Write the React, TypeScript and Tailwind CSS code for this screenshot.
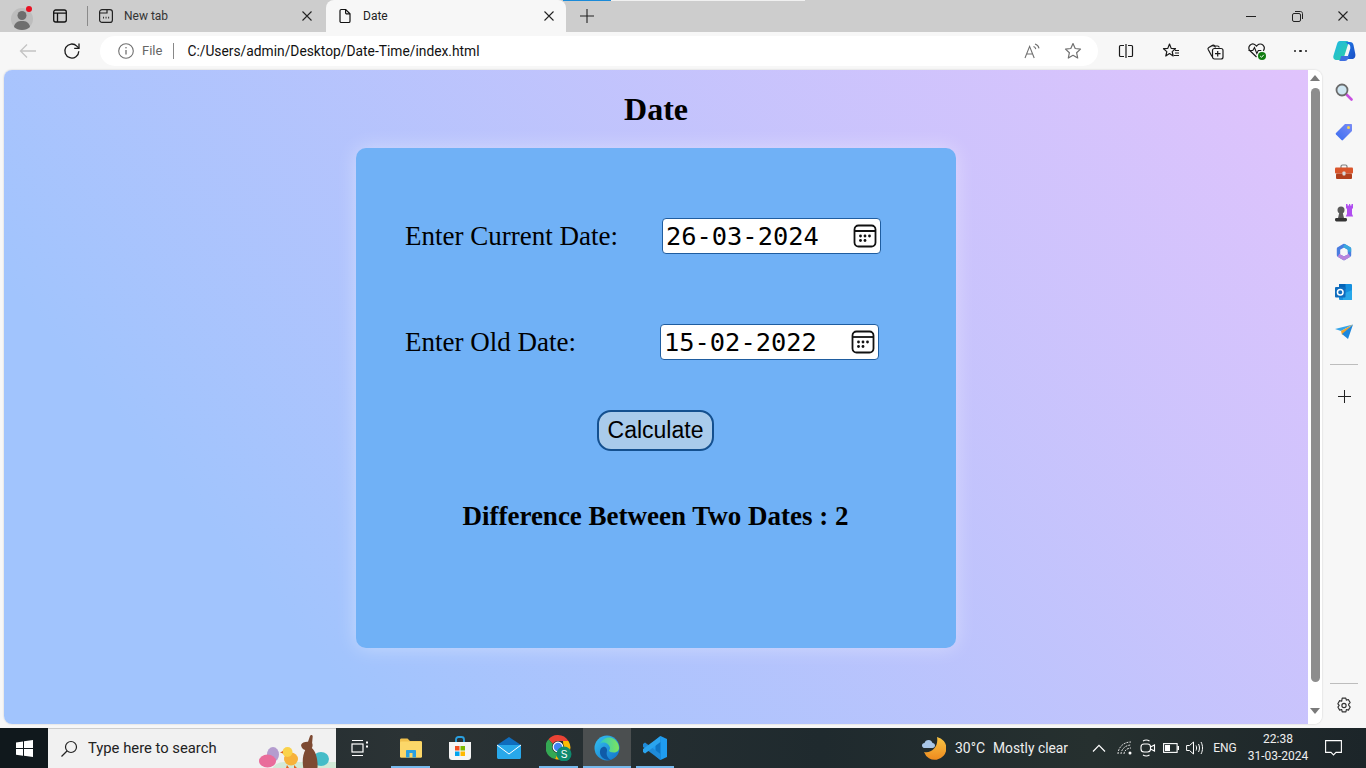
import { ReactNode } from 'react';

const Slot = ({ w, children }: { w: string; children: ReactNode }) => (
  <div className={`flex shrink-0 items-center justify-center ${w}`}>{children}</div>
);

const ProfileIcon = () => (
  <svg width="26" height="26" viewBox="0 0 26 26">
    <circle cx="12" cy="15" r="11" fill="#bdbdbd" />
    <circle cx="12" cy="11.5" r="4.5" fill="#6e6e6e" />
    <path d="M4 23c1-5 4-6 8-6s7 1 8 6c-2 2-5 3-8 3s-6-1-8-3z" fill="#6e6e6e" />
    <circle cx="19" cy="5" r="3" fill="#e81123" />
  </svg>
);

const TabsIcon = () => (
  <svg width="16" height="16" viewBox="0 0 16 16" fill="none" stroke="#111" strokeWidth="1.3">
    <rect x="1.7" y="2" width="12.6" height="12" rx="2" />
    <path d="M1.7 5.2h12.6M5.5 5.2V14" />
  </svg>
);

const NewTabIcon = () => (
  <svg width="16" height="16" viewBox="0 0 16 16" fill="none" stroke="#222" strokeWidth="1.2">
    <rect x="1.6" y="1.6" width="12.8" height="12.8" rx="2.5" />
    <path d="M1.6 5h7.4V1.6" />
    <path d="M5 9.6h.9M7.6 9.6h.9M10.2 9.6h.9" strokeWidth="1.6" />
  </svg>
);

const PageIcon = () => (
  <svg width="16" height="16" viewBox="0 0 16 16" fill="none" stroke="#111" strokeWidth="1.2">
    <path d="M3 2.8c0-.8.6-1.3 1.3-1.3h4.4L13 5.8v7.4c0 .7-.6 1.3-1.3 1.3H4.3c-.7 0-1.3-.6-1.3-1.3z" />
    <path d="M8.6 1.5v3.2c0 .7.5 1.2 1.2 1.2H13" />
  </svg>
);

const CloseIcon = ({ size = 10, color = '#222' }: { size?: number; color?: string }) => (
  <svg width={size} height={size} viewBox="0 0 10 10" stroke={color} strokeWidth="1.1">
    <path d="M.5.5l9 9M9.5.5l-9 9" />
  </svg>
);

const PlusIcon = ({ size = 14, color = '#222' }: { size?: number; color?: string }) => (
  <svg width={size} height={size} viewBox="0 0 14 14" stroke={color} strokeWidth="1.1">
    <path d="M7 0v14M0 7h14" />
  </svg>
);

const BackIcon = () => (
  <svg width="18" height="16" viewBox="0 0 18 16" fill="none" stroke="#c4c4c4" strokeWidth="1.3">
    <path d="M17 8H1.5M8 1.5L1.5 8 8 14.5" />
  </svg>
);

const RefreshIcon = () => (
  <svg width="18" height="18" viewBox="0 0 18 18" fill="none" stroke="#1a1a1a" strokeWidth="1.3">
    <path d="M15.8 9.2a7 7 0 1 1-2-5.1l2 2" />
    <path d="M16 1.6v4.8h-4.8" />
  </svg>
);

const InfoIcon = () => (
  <svg width="16" height="16" viewBox="0 0 16 16" fill="none" stroke="#707070" strokeWidth="1.1">
    <circle cx="8" cy="8" r="7.3" />
    <path d="M8 7v4.6" strokeWidth="1.3" />
    <circle cx="8" cy="4.8" r=".8" fill="#707070" stroke="none" />
  </svg>
);

const ReadAloudIcon = () => (
  <svg width="18" height="16" viewBox="0 0 18 16" fill="none" stroke="#707070" strokeWidth="1.1">
    <path d="M1 15L5.6 3.4 10.2 15M2.6 11h6" />
    <path d="M9.5 3.5c1.2.4 2 1.3 2.3 2.6M11 1c2 .6 3.6 2.2 4 4.3" />
  </svg>
);

const StarIcon = () => (
  <svg width="18" height="18" viewBox="0 0 18 18" fill="none" stroke="#707070" strokeWidth="1.2">
    <path d="M9 1.6l2.2 4.9 5.3.6-3.9 3.6 1.1 5.3L9 13.3 4.3 16l1.1-5.3L1.5 7.1l5.3-.6z" strokeLinejoin="round" />
  </svg>
);

const SplitIcon = () => (
  <svg width="16" height="16" viewBox="0 0 16 16" fill="none" stroke="#1a1a1a" strokeWidth="1.2">
    <path d="M6 2.5H2.5c-.6 0-1 .4-1 1v9c0 .6.4 1 1 1H6M10 2.5h3.500c.6 0 1 .4 1 1v9c0 .6-.4 1-1 1H10M8 1v14" />
  </svg>
);

const FavoritesIcon = () => (
  <svg width="18" height="18" viewBox="0 0 18 18" fill="none" stroke="#1a1a1a" strokeWidth="1.2">
    <path d="M7.5 2l1.700 4.400 4.300.3-3.300 2.900 1 4.400-3.700-2.500L3.800 14l1-4.400L1.500 6.700l4.300-.3z" strokeLinejoin="round" />
    <path d="M13 8.500h4M13 11h4M12 13.500h5" />
  </svg>
);

const CollectionsIcon = () => (
  <svg width="18" height="18" viewBox="0 0 18 18" fill="none" stroke="#1a1a1a" strokeWidth="1.2">
    <path d="M6 14.500L2.200 7.500c-.4-.8-.1-1.700.6-2.100l3.700-2c.8-.4 1.700-.1 2.100.6L9.500 5.500" />
    <path d="M6.500 4h5c1 0 1.600.6 1.700 1.500" />
    <rect x="6.5" y="6.5" width="10.5" height="10.5" rx="2" />
    <path d="M11.700 9v5.500M9 11.700h5.500" />
  </svg>
);

const HealthIcon = () => (
  <svg width="20" height="20" viewBox="0 0 20 20" fill="none">
    <path d="M9.500 16L3 9.800C1.400 8.200 1.400 5.700 3 4.200c1.600-1.500 4-1.500 5.500 0l1 1 1-1c1.500-1.500 4-1.500 5.500 0 1.500 1.500 1.500 4 .3 5.600" stroke="#1a1a1a" strokeWidth="1.2" />
    <path d="M1.500 9.500h4.300l1.700-3 2.300 6 1.500-3h3" stroke="#1a1a1a" strokeWidth="1.1" />
    <circle cx="15" cy="15" r="4" fill="#107c10" />
    <path d="M13.200 15l1.300 1.300 2.300-2.500" stroke="#fff" strokeWidth="1" />
  </svg>
);

const CopilotIcon = () => (
  <svg width="24" height="24" viewBox="0 0 24 24">
    <defs>
      <linearGradient id="cpA" x1="0" y1="0" x2="1" y2="1">
        <stop offset="0" stopColor="#1fb7e8" />
        <stop offset="1" stopColor="#2fd0a0" />
      </linearGradient>
      <linearGradient id="cpB" x1="0" y1="0" x2="1" y2="1">
        <stop offset="0" stopColor="#1e78e8" />
        <stop offset="1" stopColor="#1b4fc4" />
      </linearGradient>
    </defs>
    <path d="M8 2h7c1.500 0 1.800 1 1.300 2.500L12 18c-.6 2-1.600 3-3.500 3H5c-3 0-4.300-2-3.500-4.500L5 5c.5-2 1.500-3 3-3z" fill="url(#cpA)" />
    <path d="M13 3h5c2 0 3 1 3.500 3l1.800 9c.5 3-1 5-3.500 5h-7c1.500 0 2.500-1 3-2.500l2.500-8C18.500 7 18 5 15.500 5 15 4 14 3.300 13 3z" fill="url(#cpB)" />
    <path d="M9 17h8c-.5 3-2 5-4.500 5H7c1.200-.8 1.700-3 2-5z" fill="#3f6fe0" />
  </svg>
);

const CalendarIcon = () => (
  <svg width="24" height="24" viewBox="0 0 24 24" fill="none" stroke="#111" strokeWidth="1.8">
    <rect x="1.5" y="1.5" width="21" height="21" rx="4" />
    <path d="M1.5 7h21" />
    <g fill="#111" stroke="none">
      <circle cx="7.5" cy="12" r="1.4" />
      <circle cx="12" cy="12" r="1.4" />
      <circle cx="16.5" cy="12" r="1.4" />
      <circle cx="7.5" cy="16.5" r="1.4" />
      <circle cx="12" cy="16.5" r="1.4" />
    </g>
  </svg>
);

const SearchSideIcon = () => (
  <svg width="18" height="18" viewBox="0 0 18 18" fill="none">
    <path d="M10.500 10.500l6 6" stroke="#c850e0" strokeWidth="2.6" strokeLinecap="round" />
    <circle cx="7" cy="7" r="5.5" fill="#cfe6f2" stroke="#6b6b6b" strokeWidth="1.8" />
  </svg>
);

const TagIcon = () => (
  <svg width="18" height="18" viewBox="0 0 18 18">
    <defs>
      <linearGradient id="tagG" x1="0" y1="1" x2="1" y2="0">
        <stop offset="0" stopColor="#3a6cf0" />
        <stop offset="1" stopColor="#7a8cf5" />
      </linearGradient>
    </defs>
    <path d="M10 1h6c.6 0 1 .4 1 1v6L8 17c-.5.5-1 .5-1.500 0L1 11.500c-.5-.5-.5-1 0-1.500z" fill="url(#tagG)" />
    <circle cx="13.5" cy="4.5" r="1.5" fill="#f6d04d" />
  </svg>
);

const ToolboxIcon = () => (
  <svg width="18" height="16" viewBox="0 0 18 16">
    <path d="M6 4V2.500C6 1.700 6.600 1 7.500 1h3c.9 0 1.500.7 1.500 1.500V4" fill="none" stroke="#7d7d7d" strokeWidth="1.2" />
    <rect x="0" y="3.5" width="18" height="6" rx="1" fill="#d9552b" />
    <rect x="1" y="9.5" width="16" height="5.5" rx="1" fill="#b13f1c" />
    <rect x="7.5" y="7.5" width="3" height="4" rx=".8" fill="#d9d9d9" />
  </svg>
);

const ChessIcon = () => (
  <svg width="19" height="19" viewBox="0 0 19 19">
    <path d="M11 1h1.500v1.500H14V1h1.200v1.500h1.300V1H18v4l-1 1v5l1.200 2.500h-7.500L12 11V6l-1-1z" fill="#b04df0" />
    <circle cx="6" cy="7" r="3.5" fill="#5a5a5a" />
    <path d="M4.200 10h3.600l1.200 5H3z" fill="#5a5a5a" />
    <rect x="0" y="15" width="12" height="3.5" rx="1.4" fill="#333" />
  </svg>
);

const M365Icon = () => (
  <svg width="18" height="18" viewBox="0 0 18 18" fill="none">
    <path d="M9 2.500l5.500 3.200v6.600L9 15.500l-5.500-3.200V5.700z" stroke="#4a7de0" strokeWidth="3.4" strokeLinejoin="round" />
    <path d="M3.500 12.300L9 15.500l5.500-3.200" stroke="#b884dc" strokeWidth="3.4" strokeLinejoin="round" />
    <path d="M9 2.500l5.500 3.200v3" stroke="#3aa9de" strokeWidth="3.4" strokeLinejoin="round" />
  </svg>
);

const OutlookIcon = () => (
  <svg width="18" height="18" viewBox="0 0 18 18">
    <rect x="4" y="1" width="13" height="16" rx="1" fill="#1490df" />
    <rect x="4" y="1" width="6.5" height="5" fill="#0364b8" />
    <path d="M8 11l9-4v9c0 .6-.4 1-1 1H8z" fill="#28a8ea" />
    <rect x="0" y="4" width="10.5" height="10.5" rx="1" fill="#0f6cbd" />
    <circle cx="5.25" cy="9.25" r="2.8" fill="none" stroke="#fff" strokeWidth="1.5" />
  </svg>
);

const SendIcon = () => (
  <svg width="18" height="16" viewBox="0 0 18 16">
    <path d="M0 5L18 .5 6 7z" fill="#35a4e8" />
    <path d="M6 7L18 .5 7 11z" fill="#f2a32b" />
    <path d="M18 .5L13 15 7 10z" fill="#1d87dc" />
  </svg>
);

const GearIcon = () => (
  <svg width="18" height="18" viewBox="0 0 17 17" fill="none" stroke="#333" strokeWidth="1.1">
    <path d="M6.800 1h3.400l.5 2 1.900-.6 1.700 2.900-1.400 1.500.1 1.200 1.400 1.500-1.700 2.900-1.900-.6-.5 2.200H6.800l-.5-2.200-1.900.6-1.700-2.900L4 8l-1.300-1.600 1.700-3 1.900.6z" strokeLinejoin="round" />
    <circle cx="8.5" cy="8" r="2" />
  </svg>
);

const WindowsIcon = () => (
  <svg width="17" height="17" viewBox="0 0 17 17" fill="#fff">
    <path d="M0 2.400l7-1v6.700H0zM8 1.300L17 0v8.100H8zM0 9h7v6.700l-7-1zM8 9h9v8l-9-1.300z" />
  </svg>
);

const BunnyArt = () => (
  <svg width="78" height="40" viewBox="0 0 78 40">
    <path d="M14 40c2-4 6-7 12-7h52v7z" fill="#d3ead8" />
    <ellipse cx="15" cy="25.5" rx="6" ry="7.5" fill="#b49ccf" />
    <ellipse cx="9.5" cy="32" rx="8.5" ry="6.5" fill="#e96d9b" />
    <ellipse cx="63" cy="30" rx="8" ry="7" fill="#45bcc8" />
    <ellipse cx="33" cy="30" rx="7" ry="6.5" fill="#f7b23b" />
    <circle cx="29.5" cy="23" r="5" fill="#fad24a" />
    <path d="M25 22l-3 1.500 3 1z" fill="#e0641d" />
    <path d="M29 36l-1 3h3zM36 36l0 3h3z" fill="#e0641d" />
    <path d="M43 16c1-2.500 4-3.500 7-3.300l2-5.700c.6-1.400 2.600-1.200 2.700.4l-.6 6.600c.8 1.700.6 3.600-.3 5 4 3.500 6.200 11 5.700 19.500-.1.900-.7 1.500-1.600 1.500H47c-1 0-1.600-.5-1.800-1.500-1-6.500-.4-12.500 2-17.500-2-.4-3.800-2-4.200-5z" fill="#7d4a32" />
  </svg>
);

const TaskViewIcon = () => (
  <svg width="18" height="18" viewBox="0 0 18 18" fill="none" stroke="#fff" strokeWidth="1.2">
    <path d="M1 1.500h11M1 16.500h11" />
    <rect x="1" y="5" width="11" height="8" />
    <path d="M15 3.500h2M15 7.500h2" strokeWidth="2" />
  </svg>
);

const ExplorerIcon = () => (
  <svg width="22" height="20" viewBox="0 0 22 20">
    <path d="M0 2c0-1 .6-1.500 1.500-1.500h6L10 3h10.500c.9 0 1.500.6 1.500 1.500V18c0 1-.6 1.500-1.500 1.500h-19C.6 19.500 0 19 0 18z" fill="#f0c04c" />
    <rect x="0" y="3.5" width="22" height="16" rx="1.2" fill="#fbd769" />
    <path d="M6 19.500V13c0-.6.4-1 1-1h8c.6 0 1 .4 1 1v6.500h-3.500V15h-3v4.500z" fill="#2aa0e0" />
  </svg>
);

const StoreIcon = () => (
  <svg width="22" height="24" viewBox="0 0 22 24">
    <path d="M7 6V3.500C7 2 8 1 9.500 1h3C14 1 15 2 15 3.500V6" fill="none" stroke="#2aa0e0" strokeWidth="1.8" />
    <path d="M0 6h22v15c0 1.700-1.300 3-3 3H3c-1.700 0-3-1.300-3-3z" fill="#f5f5f5" />
    <rect x="6" y="10" width="4.5" height="4.5" fill="#f25022" />
    <rect x="11.5" y="10" width="4.5" height="4.5" fill="#7fba00" />
    <rect x="6" y="15.5" width="4.5" height="4.5" fill="#00a4ef" />
    <rect x="11.5" y="15.5" width="4.5" height="4.5" fill="#ffb900" />
  </svg>
);

const MailIcon = () => (
  <svg width="24" height="22" viewBox="0 0 24 22">
    <path d="M0 8L12 0l12 8z" fill="#0f6cbd" />
    <path d="M0 8h24v12.500c0 .8-.7 1.500-1.500 1.500h-21C.7 22 0 21.300 0 20.500z" fill="#28a8ea" />
    <path d="M0 8l12 9 12-9" fill="none" stroke="#fff" strokeWidth="1" />
  </svg>
);

const ChromeIcon = () => (
  <svg width="26" height="26" viewBox="0 0 26 26">
    <path d="M12 0a12 12 0 0 1 10.400 6H12a6 6 0 0 0-5.200 3L2.500 4.200A12 12 0 0 1 12 0z" fill="#ea4335" />
    <path d="M2.500 4.200L6.800 9a6 6 0 0 0 5.200 9l-3 6A12 12 0 0 1 2.500 4.200z" fill="#34a853" />
    <path d="M22.400 6A12 12 0 0 1 9 24l3-6a6 6 0 0 0 5.200-9l-.2-3z" fill="#fbbc04" />
    <circle cx="12" cy="12" r="4.8" fill="#4285f4" stroke="#fff" strokeWidth="1.2" />
    <circle cx="18" cy="19" r="7.5" fill="#0f8a6e" />
    <text x="18" y="22.5" textAnchor="middle" fontSize="10" fill="#fff" fontFamily="'Liberation Sans', sans-serif">S</text>
  </svg>
);

const EdgeIcon = () => (
  <svg width="26" height="26" viewBox="0 0 26 26">
    <defs>
      <linearGradient id="edA" x1="0" y1="0" x2="1" y2="1">
        <stop offset="0" stopColor="#35c1f1" />
        <stop offset="1" stopColor="#1271c9" />
      </linearGradient>
      <linearGradient id="edB" x1="0" y1="0" x2="1" y2="0">
        <stop offset="0" stopColor="#2fc9c2" />
        <stop offset="1" stopColor="#7ee45c" />
      </linearGradient>
    </defs>
    <circle cx="13" cy="13" r="12.5" fill="url(#edA)" />
    <path d="M6 9c2-5 7-7.500 12-6 4 1.500 7 5.500 7 10 0 3-2.500 4.500-5 4.500-3 0-5-.8-5-2 .8-1 1.300-2 .8-3.500C14.500 8 9 6 6 9z" fill="url(#edB)" />
    <path d="M9 12c-3 1-4 5-2 9 2 3 6 4.500 10 4-4-2-5-6-4-9 .5-2-1.500-5-4-4z" fill="#0f5ba8" />
  </svg>
);

const VsCodeIcon = () => (
  <svg width="26" height="26" viewBox="0 0 26 26">
    <path d="M18.500 1L25 4v18l-6.500 3L7 14z" fill="#1f9cf0" />
    <path d="M18.500 1v24l-5-4V5z" fill="#0e75c4" />
    <path d="M1 9l2-1.500 15.500 11.500v6L1 12z" fill="#1f8ad8" />
    <path d="M1 17l2 1.500L18.500 7V1L1 14z" fill="#2aa4ee" />
  </svg>
);

const WeatherIcon = () => (
  <svg width="24" height="26" viewBox="0 0 24 26">
    <defs>
      <linearGradient id="moonG" x1="0" y1="0" x2="0" y2="1">
        <stop offset="0" stopColor="#f8c545" />
        <stop offset="1" stopColor="#ee8a1e" />
      </linearGradient>
    </defs>
    <path d="M15 2a11.500 11.500 0 1 1-13 15c7 2 15-5 13-15z" fill="url(#moonG)" />
    <path d="M3 13c-2 0-3-1.200-3-2.600C0 9 1 8 2.500 8 3 6 4.500 5 6.500 5 9 5 10 6.500 10.500 8c1.500 0 2.500 1 2.500 2.500S12 13 10.500 13z" fill="#a9c7e8" />
  </svg>
);

const TrayChevron = () => (
  <svg width="14" height="8" viewBox="0 0 14 8" fill="none" stroke="#fff" strokeWidth="1.2">
    <path d="M1 7.500L7 1.300l6 6.200" />
  </svg>
);

const WifiIcon = () => (
  <svg width="16" height="14" viewBox="0 0 16 14" fill="none" stroke="#ddd" strokeWidth="1">
    <path d="M1 13c0-6 5-12 13-12M4 13c0-4 4-9 10-9M7 13c0-2.500 2.500-6 7-6" strokeDasharray="2 1" />
    <circle cx="13" cy="12" r="1.5" fill="#fff" stroke="none" />
  </svg>
);

const MeetIcon = () => (
  <svg width="16" height="18" viewBox="0 0 16 18" fill="none" stroke="#fff" strokeWidth="1.1">
    <rect x="1" y="5" width="9.5" height="8" rx="3" />
    <path d="M10.500 8l4-2v6l-4-2M3 2c2-1.300 4.500-1.300 6.500 0M3 16c2 1.300 4.500 1.300 6.500 0" />
  </svg>
);

const BatteryIcon = () => (
  <svg width="16" height="10" viewBox="0 0 16 10">
    <rect x=".6" y=".6" width="13.5" height="8.8" fill="none" stroke="#fff" strokeWidth="1.1" />
    <rect x="2" y="2" width="5" height="6" fill="#fff" />
    <rect x="14.5" y="3" width="1.5" height="4" fill="#fff" />
  </svg>
);

const VolumeIcon = () => (
  <svg width="18" height="14" viewBox="0 0 18 14" fill="none" stroke="#fff" strokeWidth="1">
    <path d="M.6 4.500h2.900L7.500 1v12l-4-3.500H.6z" />
    <path d="M10 4.500c.8 1.500.8 3.500 0 5M12.500 3c1.300 2.500 1.300 5.500 0 8M15 1c2 3.500 2 8.500 0 12" />
  </svg>
);

const NotificationIcon = () => (
  <svg width="17" height="16" viewBox="0 0 17 16" fill="none" stroke="#fff" strokeWidth="1.1">
    <path d="M.6.600h15.800v11.800H11l-2.500 2.500L6 12.400H.6z" />
  </svg>
);

const DateField = ({ value }: { value: string }) => (
  <div className="flex h-[36px] w-[219px] items-center justify-between rounded-[4px] border border-[#1f5da0] bg-white pl-[3px] pr-[3px]">
    <span className="pt-[2px] font-['DejaVu_Sans_Mono',monospace] text-[25.4px] leading-none text-black">{value}</span>
    <CalendarIcon />
  </div>
);

const TaskItem = ({
  children,
  active,
  focused,
  className = 'w-[49px]',
}: {
  children: ReactNode;
  active?: boolean;
  focused?: boolean;
  className?: string;
}) => (
  <div className={`relative flex h-full shrink-0 items-center justify-center ${className} ${focused ? 'bg-[#4b4f50]' : ''}`}>
    {children}
    {active ? <div className={`absolute bottom-0 h-[2px] bg-[#76b9ed] ${focused ? 'inset-x-0' : 'inset-x-[5px]'}`} /> : null}
  </div>
);

const sideIcons = [
  <SearchSideIcon key="search" />,
  <TagIcon key="tag" />,
  <ToolboxIcon key="tools" />,
  <ChessIcon key="games" />,
  <M365Icon key="m365" />,
  <OutlookIcon key="outlook" />,
  <SendIcon key="send" />,
];

export default function App() {
  return (
    <div className="relative flex h-[768px] w-[1366px] flex-col overflow-hidden bg-[#f7f7f7] font-['Roboto','Open_Sans',sans-serif]">
      {/* tab strip */}
      <div className="flex h-[32px] shrink-0 bg-[#cdcdcd]">
        <div className="flex w-[36px] items-center justify-end pt-[2px]">
          <ProfileIcon />
        </div>
        <Slot w="w-[48px]">
          <TabsIcon />
        </Slot>
        <div className="my-[6px] ml-[3px] w-px bg-[#8a8a8a]" />
        <div className="flex w-[238px] items-center pl-[10px] pr-[14px] text-[12px] text-[#333]">
          <NewTabIcon />
          <span className="ml-[10px]">New tab</span>
          <span className="ml-auto">
            <CloseIcon />
          </span>
        </div>
        <div className="flex w-[240px] items-center rounded-t-[8px] bg-[#f7f7f7] pl-[11px] pr-[12px] text-[12px] text-[#222]">
          <PageIcon />
          <span className="ml-[10px]">Date</span>
          <span className="ml-auto">
            <CloseIcon />
          </span>
        </div>
        <Slot w="w-[42px]">
          <PlusIcon />
        </Slot>
        <div className="flex-1" />
        <Slot w="w-[46px]">
          <div className="h-px w-[10px] bg-[#222]" />
        </Slot>
        <Slot w="w-[46px]">
          <svg width="11" height="11" viewBox="0 0 11 11" fill="none" stroke="#222" strokeWidth="1">
            <rect x=".5" y="2.5" width="8" height="8" rx="1.5" />
            <path d="M3 .5h5.500c1.100 0 2 .9 2 2V8" />
          </svg>
        </Slot>
        <Slot w="w-[46px]">
          <CloseIcon />
        </Slot>
      </div>
      <div className="absolute left-[563px] top-0 h-px w-[48px] bg-[#1a8ad8]" />
      <div className="absolute left-[611px] top-0 h-px w-[194px] bg-[#f0f0f0]" />

      {/* toolbar */}
      <div className="flex h-[38px] shrink-0 items-center bg-[#f7f7f7]">
        <Slot w="w-[56px]">
          <BackIcon />
        </Slot>
        <Slot w="w-[32px]">
          <RefreshIcon />
        </Slot>
        <div className="ml-[12px] flex h-[30px] w-[998px] items-center rounded-full bg-white pl-[18px] text-[13.8px]">
          <InfoIcon />
          <span className="ml-[8px] text-[13px] text-[#666]">File</span>
          <div className="ml-[11px] h-[16px] w-px bg-[#888]" />
          <span className="ml-[13px] text-[#111]">C:/Users/admin/Desktop/Date-Time/index.html</span>
          <div className="ml-auto flex items-center">
            <Slot w="w-[40px]">
              <ReadAloudIcon />
            </Slot>
            <Slot w="w-[40px]">
              <StarIcon />
            </Slot>
            <div className="w-[5px]" />
          </div>
        </div>
        <div className="w-[5px]" />
        <Slot w="w-[45px]">
          <SplitIcon />
        </Slot>
        <Slot w="w-[46px]">
          <FavoritesIcon />
        </Slot>
        <Slot w="w-[41px]">
          <CollectionsIcon />
        </Slot>
        <Slot w="w-[44px]">
          <HealthIcon />
        </Slot>
        <Slot w="w-[43px]">
          <div className="flex gap-[3px]">
            <div className="size-[2.5px] rounded-full bg-[#222]" />
            <div className="size-[2.5px] rounded-full bg-[#222]" />
            <div className="size-[2.5px] rounded-full bg-[#222]" />
          </div>
        </Slot>
        <Slot w="w-[43px]">
          <CopilotIcon />
        </Slot>
      </div>

      {/* page + scrollbar + sidebar */}
      <div className="flex min-h-0 flex-1 bg-[#f7f7f7]">
        <div className="mb-[4px] ml-[4px] flex w-[1318px] overflow-hidden rounded-[8px] bg-white shadow-[0_0_2px_rgba(0,0,0,0.2)]">
          <div className="w-[1304px] bg-[linear-gradient(50deg,#a1c4fd_20%,#e0c3fc_100%)] font-['Liberation_Serif',serif] text-black">
            <h1 className="pt-[21px] text-center text-[32px] font-bold leading-[37px]">Date</h1>
            <div className="mx-auto mt-[20px] h-[500px] w-[600px] rounded-[10px] bg-[#70b1f6] pl-[49px] pt-[70px] shadow-[0_0_20px_rgba(255,255,255,0.4)]">
              <div className="flex h-[36px] items-center gap-[44px] text-[27px]">
                <label>Enter Current Date:</label>
                <DateField value="26-03-2024" />
              </div>
              <div className="mt-[70px] flex h-[36px] items-center gap-[84px] text-[27px]">
                <label>Enter Old Date:</label>
                <DateField value="15-02-2022" />
              </div>
              <div className="-ml-[50px] mt-[50px] flex justify-center">
                <button className="h-[41px] w-[117px] rounded-[14px] border-2 border-[#14508f] bg-[#a9cbeb] font-['Liberation_Sans',sans-serif] text-[23px] leading-none text-black">
                  Calculate
                </button>
              </div>
              <p className="-ml-[50px] mt-[50px] text-center text-[27px] font-bold leading-[31px]">
                Difference Between Two Dates : 2
              </p>
            </div>
          </div>
          <div className="flex w-[14px] flex-col items-center bg-white">
            <div className="mt-[5px] h-0 w-0 border-x-[5px] border-b-[6px] border-x-transparent border-b-[#7a7a7a]" />
            <div className="mt-[7px] h-[594px] w-[9px] rounded-full bg-[#8d8d8d]" />
            <div className="mt-[26px] h-0 w-0 border-x-[5px] border-t-[6px] border-x-transparent border-t-[#7a7a7a]" />
          </div>
        </div>
        <div className="flex w-[44px] flex-col items-center">
          <div className="mt-[2px] flex flex-col">
            {sideIcons.map((icon, i) => (
              <div key={i} className="flex h-[40px] w-[44px] items-center justify-center">
                {icon}
              </div>
            ))}
          </div>
          <div className="mt-[12px] h-px w-[28px] bg-[#bdbdbd]" />
          <div className="mt-[11px] flex h-[40px] items-center">
            <PlusIcon size={13} />
          </div>
          <div className="mt-auto h-px w-[28px] bg-[#bdbdbd]" />
          <div className="mb-[1px] flex h-[43px] items-center">
            <GearIcon />
          </div>
        </div>
      </div>

      {/* taskbar */}
      <div className="flex h-[40px] shrink-0 items-center bg-[linear-gradient(90deg,#1c262b_0%,#2b3335_30%,#1f2a2e_60%,#26302f_80%,#1c2529_100%)] text-white">
        <div className="flex h-full w-[48px] items-center justify-center bg-[#10181c]">
          <WindowsIcon />
        </div>
        <div className="flex h-full w-[288px] items-center overflow-hidden border-t border-[#ccc] bg-[#f1f1f1] pl-[12px] text-[14.8px] text-[#222]">
          <svg width="18" height="18" viewBox="0 0 18 18" fill="none" stroke="#222" strokeWidth="1.2">
            <circle cx="11" cy="7" r="5.5" />
            <path d="M7 11l-5.500 5.500" />
          </svg>
          <span className="ml-[10px]">Type here to search</span>
          <div className="ml-auto">
            <BunnyArt />
          </div>
        </div>
        <Slot w="w-[50px]">
          <div className="pr-[2px]">
            <TaskViewIcon />
          </div>
        </Slot>
        <TaskItem active>
          <ExplorerIcon />
        </TaskItem>
        <TaskItem>
          <StoreIcon />
        </TaskItem>
        <TaskItem className="w-[50px]">
          <MailIcon />
        </TaskItem>
        <TaskItem active>
          <ChromeIcon />
        </TaskItem>
        <TaskItem active focused className="w-[48px]">
          <EdgeIcon />
        </TaskItem>
        <TaskItem active className="w-[48px]">
          <VsCodeIcon />
        </TaskItem>
        <div className="flex-1" />
        <Slot w="w-[26px]">
          <WeatherIcon />
        </Slot>
        <span className="ml-[8px] text-[14px] text-[#eee]">30°C</span>
        <span className="ml-[8px] text-[13.8px] text-[#eee]">Mostly clear</span>
        <div className="w-[19px]" />
        <Slot w="w-[24px]">
          <TrayChevron />
        </Slot>
        <div className="w-[2px]" />
        <Slot w="w-[24px]">
          <WifiIcon />
        </Slot>
        <Slot w="w-[22px]">
          <MeetIcon />
        </Slot>
        <Slot w="w-[24px]">
          <BatteryIcon />
        </Slot>
        <Slot w="w-[24px]">
          <VolumeIcon />
        </Slot>
        <span className="ml-[3px] w-[30px] text-center text-[12px] text-[#eee]">ENG</span>
        <div className="ml-[4px] flex w-[68px] flex-col items-center text-[12px] leading-[17px] text-[#eee]">
          <span>22:38</span>
          <span>31-03-2024</span>
        </div>
        <Slot w="w-[43px]">
          <NotificationIcon />
        </Slot>
        <div className="w-[11px]" />
      </div>
    </div>
  );
}
